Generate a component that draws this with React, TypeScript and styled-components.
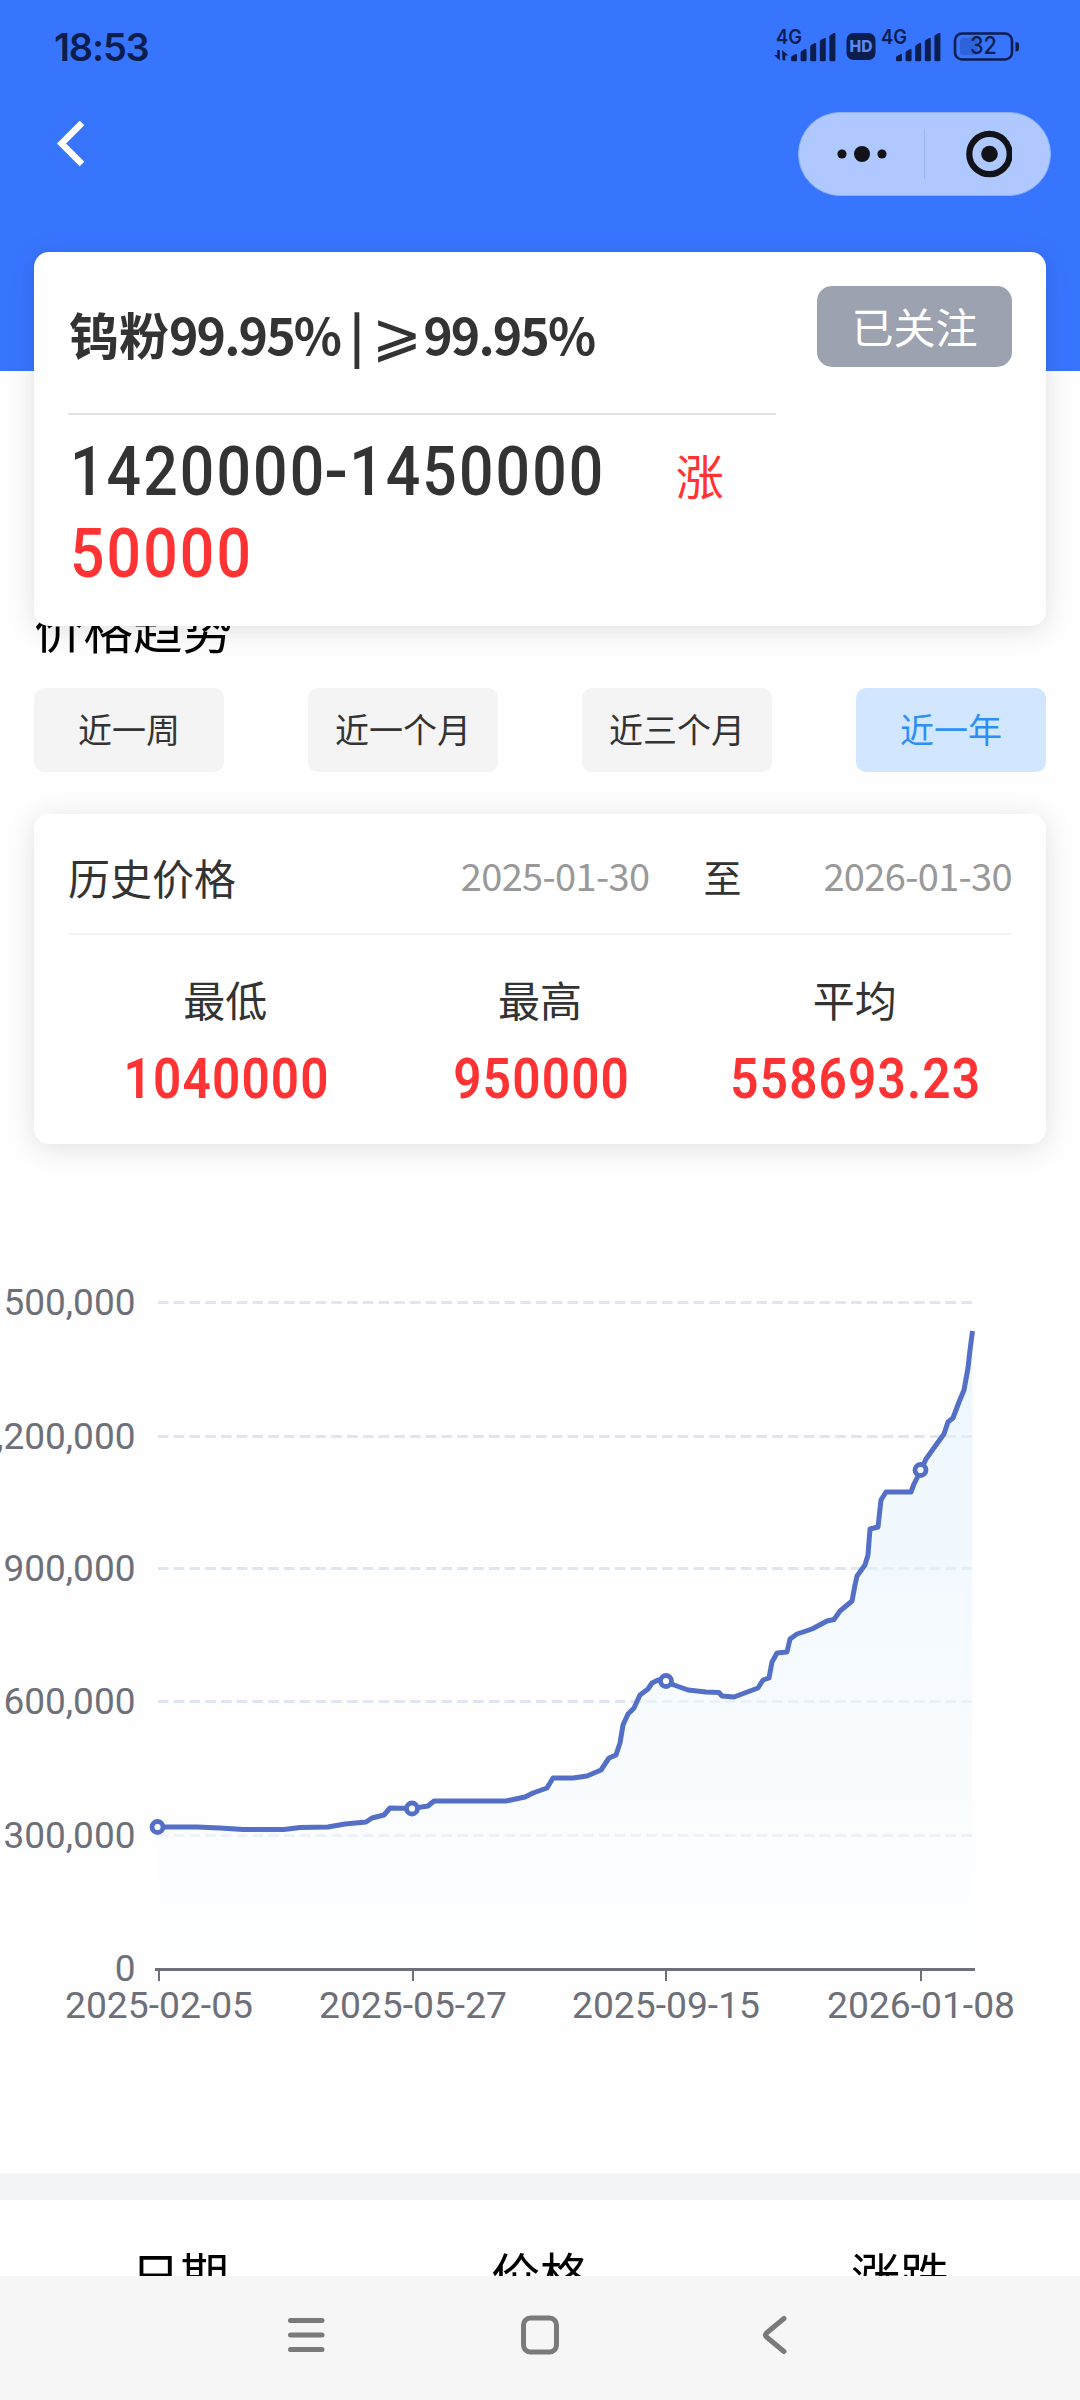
import React from "react";
import styled, { createGlobalStyle } from "styled-components";

const CJK = '"Noto Sans CJK SC", "Noto Sans", "DejaVu Sans", sans-serif';
const NUM = 'Roboto, "Noto Sans", sans-serif';
const INK = "#0b1e4d";

const GlobalStyle = createGlobalStyle`
  body { margin: 0; background: #fff; }
  * { box-sizing: border-box; }
  svg { display: block; flex: none; }
`;

const Screen = styled.div`
  width: 1080px;
  height: 2400px;
  overflow: hidden;
  display: flex;
  flex-direction: column;
  background: #fefefe;
  font-family: ${CJK};
  color: #333;
`;

const Header = styled.header`
  flex: none;
  height: 371px;
  background: #3875ff;
`;

const StatusBar = styled.div`
  height: 94px;
  padding: 0 61px 0 54px;
  display: flex;
  align-items: center;
  justify-content: space-between;
`;

const Clock = styled.span`
  font: 600 38px/94px Inter, sans-serif;
  letter-spacing: -1.2px;
  color: ${INK};
`;

const NavBar = styled.div`
  height: 120px;
  padding: 18px 29px 0 57px;
  display: flex;
  justify-content: space-between;
  align-items: flex-start;
`;

const BackButton = styled.button`
  border: 0;
  padding: 9px 0 0;
  background: none;
`;

const Capsule = styled.div`
  width: 253px;
  height: 84px;
  border-radius: 42px;
  border: 1px solid #8fb0f5;
  background: #afc8ff;
  display: flex;
  align-items: center;
`;

const CapsuleHalf = styled.div`
  flex: 1;
  display: flex;
  justify-content: center;
`;

const CapsuleDivider = styled.div`
  width: 1px;
  height: 50px;
  background: #9ab4e8;
`;

const Card = styled.section`
  flex: none;
  margin: 0 34px;
  border-radius: 15px;
  background: #fff;
  box-shadow: 0 4px 28px rgba(0, 0, 0, 0.12);
`;

const QuoteCard = styled(Card)`
  position: relative;
  z-index: 1;
  height: 374px;
  margin-top: -119px;
  padding: 34px 34px 0;
`;

const QuoteTop = styled.div`
  display: flex;
  justify-content: space-between;
  align-items: flex-start;
`;

const QuoteTitle = styled.h1`
  margin: 0;
  width: 708px;
  height: 129px;
  padding-left: 1px;
  border-bottom: 2px solid #e2e3e3;
  font-size: 50px;
  font-weight: 700;
  line-height: 95px;
  letter-spacing: -1.9px;
  white-space: nowrap;
`;

const Metal = styled.span`
  letter-spacing: 0;
`;

const AtLeast = styled.span`
  margin: 0 3px 0 0;
  font: 400 60px/0 "DejaVu Sans", sans-serif;
`;

const FollowButton = styled.button`
  width: 195px;
  height: 81px;
  border: 0;
  border-radius: 15px;
  background: #9ca2af;
  color: #fff;
  font: 400 42px/79px ${CJK};
  padding: 0 0 2px;
`;

const QuotePrice = styled.p`
  margin: 16px 0 0;
  width: 708px;
  padding-left: 2px;
  font: 500 69px/82px ${NUM};
`;

const Digits = styled.span<{ $trim: number; $color?: string }>`
  display: inline-block;
  transform: scaleX(0.88);
  transform-origin: left;
  letter-spacing: 2.4px;
  margin-right: -${(p) => p.$trim}px;
  color: ${(p) => p.$color ?? "inherit"};
`;

const Dash = styled.span`
  display: inline-block;
  transform: scaleX(1.15);
`;

const RiseWord = styled.span`
  margin-left: 54px;
  font: 400 48px/1 ${CJK};
  color: #f33;
`;

const SectionTitle = styled.h2`
  flex: none;
  margin: -23px 34px 0;
  height: 50px;
  font-size: 49.5px;
  font-weight: 400;
  line-height: 50px;
  color: #000;
`;

const Tabs = styled.nav`
  flex: none;
  margin: 35px 34px 42px;
  display: flex;
  justify-content: space-between;
`;

const Tab = styled.button<{ $active: boolean }>`
  width: 190px;
  height: 84px;
  padding: 0 0 2px;
  border: 0;
  border-radius: 10px;
  font: 400 34px/82px ${CJK};
  background: ${(p) => (p.$active ? "#d2e7ff" : "#f4f4f4")};
  color: ${(p) => (p.$active ? "#2e8ef7" : "#333")};
`;

const HistoryCard = styled(Card)`
  height: 330px;
  padding: 0 34px;
`;

const HistoryHead = styled.div`
  height: 121px;
  padding-top: 6px;
  border-bottom: 2px solid #f3f3f3;
  display: flex;
  align-items: center;
`;

const HistoryTitle = styled.span`
  flex: 1;
  font-size: 42px;
`;

const DateText = styled.span`
  padding-bottom: 5px;
  font-size: 38px;
  letter-spacing: -0.65px;
  color: #999;
`;

const Until = styled.span`
  margin: 0 82px 0 54px;
  padding-bottom: 2px;
  font-size: 38px;
`;

const Stats = styled.div`
  display: grid;
  grid-template-columns: repeat(3, 1fr);
  text-align: center;
`;

const StatLabel = styled.div`
  margin-top: 34px;
  font-size: 42px;
  line-height: 60px;
`;

const StatValue = styled.div`
  margin-top: 17px;
  padding-left: 3px;
  font: 600 55px/66px ${NUM};
  letter-spacing: 1.3px;
  transform: scaleX(0.9);
  color: #f33;
`;

const ChartArea = styled.div`
  flex: none;
  height: 1029px;
`;

const AxisText = styled.text`
  font: 400 37px ${NUM};
  fill: #6e7079;
`;

const Band = styled.div`
  flex: none;
  height: 27px;
  background: #f2f3f6;
`;

const TableHead = styled.div`
  flex: none;
  height: 76px;
  overflow: hidden;
  display: grid;
  grid-template-columns: repeat(3, 1fr);
  text-align: center;
  color: #000;
  font-size: 49px;
  line-height: 145px;
`;

const SystemNav = styled.footer`
  flex: none;
  height: 124px;
  background: #f6f6f6;
  display: flex;
  align-items: flex-start;
  justify-content: center;
`;

const BARS = [7, 12, 18, 23, 28];

function Signal({ x }: { x: number }) {
  return (
    <g fill={INK}>
      {BARS.map((h, i) => (
        <path
          key={h}
          d={`M${x + i * 9.6} ${62 - h + 2.5}q0 -1 1 -1.5l3.5 -2q1.5 -.5 1.5 1V60q0 1.3 -1.3 1.3h-3.4q-1.3 0 -1.3 -1.3z`}
        />
      ))}
    </g>
  );
}

function StatusIcons() {
  return (
    <svg width="247" height="94" viewBox="772 0 247 94" fontFamily="Inter, sans-serif">
      <text x="776" y="44" fontSize="20" fontWeight="600" fill={INK} textLength="26" lengthAdjust="spacingAndGlyphs">4G</text>
      <path d="M774 55l3.2 0 0 -5 2.6 0 0 10.5zM782 50l6.5 5.5h-3.2v5h-2.8z" fill={INK} />
      <Signal x={791} />
      <rect x="846.5" y="33" width="29" height="27" rx="7" fill={INK} />
      <text x="849.5" y="51.8" fontSize="15.5" fontWeight="800" fill="#5d88f0" textLength="23" lengthAdjust="spacingAndGlyphs">HD</text>
      <text x="881" y="44" fontSize="20" fontWeight="600" fill={INK} textLength="26" lengthAdjust="spacingAndGlyphs">4G</text>
      <Signal x={896} />
      <rect x="960" y="38" width="18" height="17" rx="3" fill="#2e63dc" />
      <rect x="955" y="33.5" width="57" height="26" rx="7" fill="none" stroke={INK} strokeWidth="2.6" />
      <path d="M1015.5 42q3.5 0 3.5 3v3.5q0 3 -3.5 3z" fill={INK} />
      <text x="970" y="54.3" fontSize="24" fontWeight="500" fill={INK} textLength="27" lengthAdjust="spacingAndGlyphs">32</text>
    </svg>
  );
}

const LINE: [number, number][] = [
  [157, 1827], [197, 1827], [220, 1828], [243, 1829.5], [284, 1829.5], [300, 1827.5], [328, 1827],
  [345, 1824], [366, 1822], [372, 1818], [384, 1815], [390, 1808], [412, 1808.5], [428, 1806],
  [434, 1801], [506, 1801], [525, 1797], [533, 1793], [547, 1788], [553, 1778], [573, 1778],
  [587, 1776], [601, 1770], [609, 1758], [616, 1755], [620, 1743], [623, 1725], [628, 1714],
  [634, 1708], [640, 1695], [648, 1689], [652, 1683], [658, 1680], [666, 1681], [674, 1685],
  [688, 1690], [706, 1692], [719, 1692.5], [722, 1696], [734, 1697], [746, 1692.5], [758, 1688],
  [763, 1680], [769, 1678], [772, 1662], [777, 1653], [787, 1652], [790, 1639], [797, 1634],
  [812, 1629], [827, 1621], [834, 1619.5], [840, 1611], [852, 1601], [855, 1585], [857, 1576],
  [865, 1565], [868, 1555], [870, 1529], [878, 1527], [881, 1500], [886, 1492], [911, 1492],
  [914, 1484], [921, 1470], [926, 1459], [936, 1445], [944, 1434], [948, 1422], [953, 1418],
  [959, 1402], [964, 1390], [968, 1368], [970, 1350], [972.5, 1331],
];
const MARKS: [number, number][] = [[157.5, 1827], [412, 1808.5], [666, 1681], [920.5, 1470]];
const Y_LABELS = [
  { text: "500,000", y: 1302.5 },
  { text: ",200,000", y: 1436.5 },
  { text: "900,000", y: 1568.5 },
  { text: "600,000", y: 1701.5 },
  { text: "300,000", y: 1835.5 },
];
const X_LABELS = [
  { text: "2025-02-05", x: 159 },
  { text: "2025-05-27", x: 413 },
  { text: "2025-09-15", x: 666 },
  { text: "2026-01-08", x: 921 },
];

function PriceChart() {
  const points = LINE.map((p) => p.join(",")).join(" ");
  return (
    <svg width="1080" height="1029" viewBox="0 1144 1080 1029">
      <defs>
        <linearGradient id="area" x1="0" y1="0" x2="0" y2="1">
          <stop offset="0" stopColor="#dceffe" stopOpacity="0.5" />
          <stop offset="1" stopColor="#ffffff" stopOpacity="0.6" />
        </linearGradient>
      </defs>
      {Y_LABELS.map(({ text, y }) => (
        <g key={text}>
          <path d={`M158 ${y}H972`} stroke="#e0e6f1" strokeWidth="2.8" strokeDasharray="10.6 5.15" />
          <AxisText x="135.5" y={y + 12.5} textAnchor="end">{text}</AxisText>
        </g>
      ))}
      <AxisText x="135.5" y="1981" textAnchor="end">0</AxisText>
      <polygon points={`158,1969 ${points} 972,1969`} fill="url(#area)" />
      <path d="M155 1969.5H975" stroke="#6e7079" strokeWidth="3" />
      {X_LABELS.map(({ text, x }) => (
        <g key={text}>
          <path d={`M${x} 1971v10`} stroke="#6e7079" strokeWidth="2" />
          <AxisText x={x} y="2018" textAnchor="middle" textLength="188" lengthAdjust="spacingAndGlyphs">{text}</AxisText>
        </g>
      ))}
      <polyline points={points} fill="none" stroke="#5470c6" strokeWidth="5" strokeLinejoin="round" />
      {MARKS.map(([x, y]) => (
        <circle key={x} cx={x} cy={y} r="5.5" fill="#fff" stroke="#5470c6" strokeWidth="4.8" />
      ))}
    </svg>
  );
}

const RANGES = ["近一周", "近一个月", "近三个月", "近一年"];
const STATS = [
  ["最低", "1040000"],
  ["最高", "950000"],
  ["平均", "558693.23"],
];

export default function App() {
  return (
    <Screen>
      <GlobalStyle />
      <Header>
        <StatusBar>
          <Clock>18:53</Clock>
          <StatusIcons />
        </StatusBar>
        <NavBar>
          <BackButton aria-label="返回">
            <svg width="30" height="46" viewBox="0 0 30 46">
              <path d="M25 2L4.5 22.5L25 43" fill="none" stroke="#fff" strokeWidth="6.5" />
            </svg>
          </BackButton>
          <Capsule>
            <CapsuleHalf>
              <svg width="52" height="18" viewBox="0 0 52 18" fill="#111318">
                <circle cx="6" cy="9" r="4.6" />
                <circle cx="26" cy="9" r="8" />
                <circle cx="46" cy="9" r="4.6" />
              </svg>
            </CapsuleHalf>
            <CapsuleDivider />
            <CapsuleHalf>
              <svg width="48" height="48" viewBox="0 0 48 48">
                <circle cx="25.5" cy="24" r="20.2" fill="none" stroke="#111318" strokeWidth="6.2" />
                <circle cx="25.5" cy="24" r="8.3" fill="#111318" />
              </svg>
            </CapsuleHalf>
          </Capsule>
        </NavBar>
      </Header>

      <QuoteCard>
        <QuoteTop>
          <QuoteTitle>
            <Metal>钨粉</Metal>99.95% | <AtLeast>⩾</AtLeast>99.95%
          </QuoteTitle>
          <FollowButton>已关注</FollowButton>
        </QuoteTop>
        <QuotePrice>
          <Digits $trim={74}>
            1420000<Dash>-</Dash>1450000
          </Digits>{" "}
          <RiseWord>涨</RiseWord>{" "}
          <Digits $trim={24} $color="#f33">50000</Digits>
        </QuotePrice>
      </QuoteCard>

      <SectionTitle>价格趋势</SectionTitle>
      <Tabs>
        {RANGES.map((r) => (
          <Tab key={r} $active={r === "近一年"}>{r}</Tab>
        ))}
      </Tabs>

      <HistoryCard>
        <HistoryHead>
          <HistoryTitle>历史价格</HistoryTitle>
          <DateText>2025-01-30</DateText>
          <Until>至</Until>
          <DateText>2026-01-30</DateText>
        </HistoryHead>
        <Stats>
          {STATS.map(([label, value]) => (
            <div key={label}>
              <StatLabel>{label}</StatLabel>
              <StatValue>{value}</StatValue>
            </div>
          ))}
        </Stats>
      </HistoryCard>

      <ChartArea>
        <PriceChart />
      </ChartArea>

      <Band />
      <TableHead>
        <span>日期</span>
        <span>价格</span>
        <span>涨跌</span>
      </TableHead>

      <SystemNav>
        <svg width="520" height="124" viewBox="280 2276 520 124" fill="none" stroke="#7a7a7a" strokeWidth="5" strokeLinecap="round" strokeLinejoin="round">
          <path d="M290.5 2320.5H322M290.5 2335H322M290.5 2349.5H322" />
          <rect x="523.5" y="2318" width="33" height="34" rx="7" />
          <path d="M784 2318.5L766.5 2333Q764.5 2335 766.5 2337L784 2351.5" />
        </svg>
      </SystemNav>
    </Screen>
  );
}
